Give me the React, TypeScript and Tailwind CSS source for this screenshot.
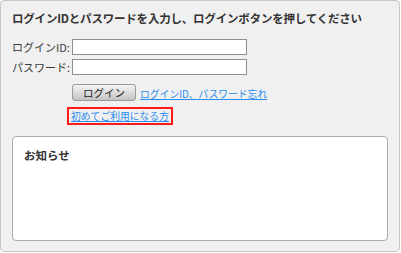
import React from "react";

const font = { fontFamily: '"Noto Sans CJK JP", "Noto Sans", sans-serif' };

export default function App() {
  return (
    <div className="w-[401px] h-[253px] bg-white" style={font}>
      <div className="w-[400px] h-[252px] border border-[#c6c6c6] rounded-[4px] bg-[#f0f0f0] pt-[9px] px-[11px] flex flex-col">
        {/* title */}
        <h1 className="text-[11.5px] leading-[16px] font-bold text-[#333] tracking-[-0.2px]">
          ログインIDとパスワードを入力し、ログインボタンを押してください
        </h1>

        {/* form */}
        <div className="mt-[13px] flex flex-col gap-[4px]">
          <div className="flex items-center h-[16px]">
            <label className="w-[60px] text-[11px] text-[#3a3a3a]">ログインID:</label>
            <input className="w-[175px] h-[16px] bg-white border border-[#8e8e8e]" />
          </div>
          <div className="flex items-center h-[16px]">
            <label className="w-[60px] text-[11px] text-[#3a3a3a]">パスワード:</label>
            <input type="password" className="w-[175px] h-[16px] bg-white border border-[#8e8e8e]" />
          </div>
        </div>

        <div className="mt-[9px] ml-[60px] flex items-end gap-[4px]">
          <button className="w-[64px] h-[17px] rounded-[3px] border border-[#9a9a9a] bg-gradient-to-b from-[#f4f4f4] to-[#c4c4c4] text-[10.5px] leading-[14px] text-[#222]">
            ログイン
          </button>
          <a href="#" className="text-[9.8px] leading-[13px] text-[#2a8cf0] underline">
            ログインID、パスワード忘れ
          </a>
        </div>

        <div className="mt-[6px] ml-[55px] self-start border-2 border-[#ff1a1a] px-[2px] h-[18px] flex items-center">
          <a href="#" className="text-[9.8px] leading-[13px] text-[#2a8cf0] underline">
            初めてご利用になる方
          </a>
        </div>

        {/* notice */}
        <div className="mt-[11px] h-[105px] bg-white border border-[#ababab] rounded-[4px] px-[11px] pt-[10px]">
          <h2 className="text-[11.5px] font-bold text-[#333]">お知らせ</h2>
        </div>
      </div>
    </div>
  );
}
